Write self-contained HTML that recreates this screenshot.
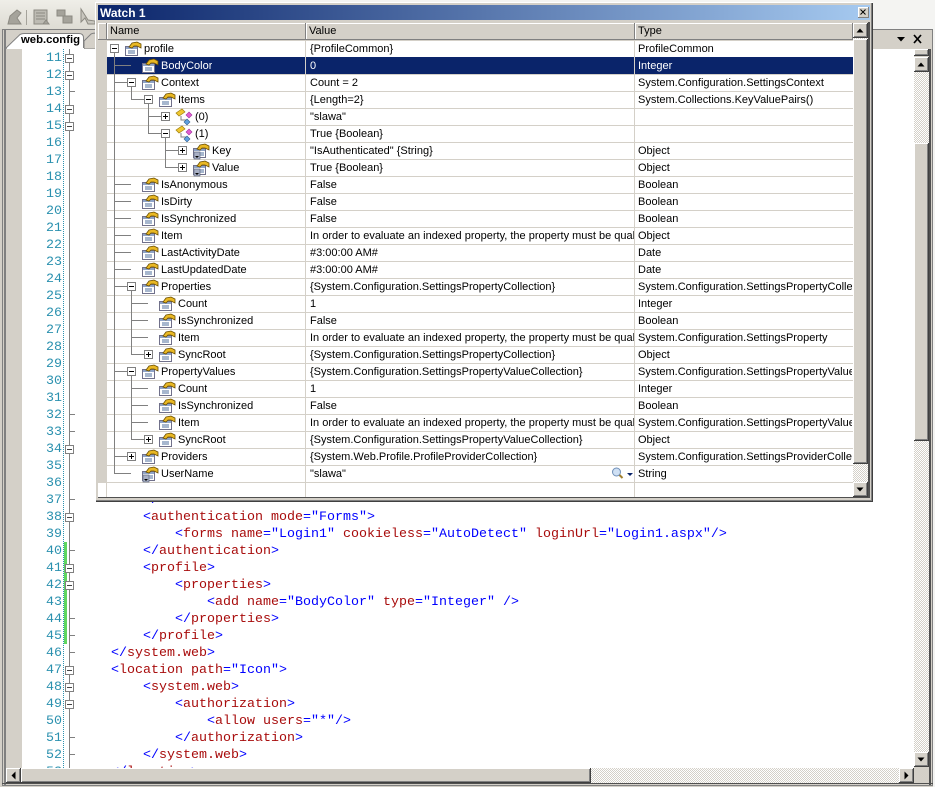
<!DOCTYPE html>
<html><head><meta charset="utf-8"><style>
html,body{margin:0;padding:0}
body{width:935px;height:787px;position:relative;overflow:hidden;background:#d4d0c8;font-family:"Liberation Sans",sans-serif}
div,pre,svg{position:absolute;margin:0}
.b{background:#d4d0c8;box-shadow:inset -1px -1px 0 #404040,inset 1px 1px 0 #fff,inset -2px -2px 0 #808080}
.hb{background:#d4d0c8;box-shadow:inset -1px -1px 0 #808080,inset 1px 1px 0 #fff}
.c{background:repeating-conic-gradient(#d4d0c8 0 25%,#fff 0 50%) 0 0/2px 2px}
pre{font:13.333px/17px "Liberation Mono",monospace}
i{font-style:normal;color:#0000ff}
b{font-weight:normal;color:#a80c0c}
.r{left:107px;width:746px;height:16px;border-top:1px solid #d4d0c8;background:#fff;font-size:11px;line-height:16px;color:#000;white-space:nowrap}
.r span{position:absolute;top:0;height:16px;overflow:hidden}
.r .v{left:203px;width:324px}
.r .t{left:531px;width:214px}
.sel{background:#0a246a;color:#fff;border-top-color:#0a246a}
.h{top:23px;height:16px;font-size:11px;line-height:16px;color:#000}
</style></head><body>

<!-- top toolbar -->
<div style="left:0;top:0;width:935px;height:29px;background:#f4f4f2"></div>
<div style="left:0;top:0;width:96px;height:29px;background:linear-gradient(#efeee8,#dedcd4)"></div>
<svg style="left:0;top:0" width="96" height="29">
<g fill="#a5a39b" stroke="#8c8a82" stroke-width="1">
<path d="M8 24 L10 16 L17 10 L21 13 L17 18 L21 24 Z"/>
<rect x="34" y="10" width="13" height="14" fill="#bdbbb3"/>
<path d="M36 13h9M36 16h9M36 19h9" fill="none"/>
<path d="M46 20l3 4h-6z"/>
<rect x="57" y="10" width="8" height="6"/>
<rect x="63" y="16" width="9" height="7"/>
<path d="M81 9 L81 22 L85 18 L88 24 L95 24 L95 21 L88 20 Z" fill="#c8c6be"/>
</g>
<path d="M26.500 10V25" stroke="#a5a39b"/>
</svg>
<div style="left:2px;top:29px;width:931px;height:1px;background:#808080"></div>

<!-- frame -->
<div style="left:2px;top:30px;width:1px;height:755px;background:#808080"></div>
<div style="left:4px;top:30px;width:2px;height:755px;background:#808080"></div>
<div style="left:929px;top:49px;width:2px;height:736px;background:#505050"></div>
<div style="left:932px;top:29px;width:1px;height:756px;background:#808080"></div>
<div style="left:933px;top:0;width:2px;height:787px;background:#f4f4f2"></div>
<div style="left:2px;top:783px;width:931px;height:1px;background:#505050"></div>
<div style="left:2px;top:785px;width:931px;height:1px;background:#808080"></div>

<!-- tab -->
<svg style="left:0;top:29px" width="100" height="21">
<path d="M84 20 V12 L91 5 Q93 4 97 4 H100 V20 Z" fill="#d4d0c8" stroke="#808080"/>
<path d="M5.500 19.500 L20 5.500 Q22 4.500 24 4.500 H79 Q83.500 4.500 83.500 9 V20 H5.500 Z" fill="#fff" stroke="#808080"/>
<path d="M7 20 H84" stroke="#fff" stroke-width="2"/>
</svg>
<div style="left:21px;top:32px;font:bold 11.300px/17px 'Liberation Sans',sans-serif;color:#000">web.config</div>

<!-- right tab controls -->
<svg style="left:873px;top:30px" width="60" height="19">
<path d="M24 7h8l-4 4.500z" fill="#000"/>
<path d="M41 5l7 8M48 5l-7 8" stroke="#000" stroke-width="1.700" fill="none"/>
</svg>

<!-- editor -->
<div style="left:22px;top:49px;width:892px;height:719px;background:#fff;overflow:hidden">
<div style="left:42px;top:493px;width:3px;height:102px;background:#5fd65f"></div>
<div style="left:41px;top:0;width:0;height:719px;border-left:1px dotted #2b91af"></div>
<div style="left:47px;top:0;width:1px;height:719px;background:#808080"></div>
<pre style="left:0;top:1px;width:40px;text-align:right;color:#2b91af">11
12
13
14
15
16
17
18
19
20
21
22
23
24
25
26
27
28
29
30
31
32
33
34
35
36
37
38
39
40
41
42
43
44
45
46
47
48
49
50
51
52
53</pre>
<pre style="left:89px;top:443px">    <i>&lt;/</i>
    <i>&lt;</i><b>authentication</b> <b>mode</b><i>="Forms"&gt;</i>
        <i>&lt;</i><b>forms</b> <b>name</b><i>="Login1"</i> <b>cookieless</b><i>="AutoDetect"</i> <b>loginUrl</b><i>="Login1.aspx"/&gt;</i>
    <i>&lt;/</i><b>authentication</b><i>&gt;</i>
    <i>&lt;</i><b>profile</b><i>&gt;</i>
        <i>&lt;</i><b>properties</b><i>&gt;</i>
            <i>&lt;</i><b>add</b> <b>name</b><i>="BodyColor"</i> <b>type</b><i>="Integer"</i> <i>/&gt;</i>
        <i>&lt;/</i><b>properties</b><i>&gt;</i>
    <i>&lt;/</i><b>profile</b><i>&gt;</i>
<i>&lt;/</i><b>system.web</b><i>&gt;</i>
<i>&lt;</i><b>location</b> <b>path</b><i>="Icon"&gt;</i>
    <i>&lt;</i><b>system.web</b><i>&gt;</i>
        <i>&lt;</i><b>authorization</b><i>&gt;</i>
            <i>&lt;</i><b>allow</b> <b>users</b><i>="*"/&gt;</i>
        <i>&lt;/</i><b>authorization</b><i>&gt;</i>
    <i>&lt;/</i><b>system.web</b><i>&gt;</i>
<i>&lt;/</i><b>location</b><i>&gt;</i></pre>
</div>
<div style="left:6px;top:49px;width:16px;height:719px;background:#d4d0c8"></div>

<svg style="left:0;top:0" width="80" height="768">
<defs>
<g id="ob"><rect x=".5" y=".5" width="8" height="8" fill="#fff" stroke="#808080"/><path d="M2 4.500h5" stroke="#444"/></g>
</defs>
<g stroke="#808080" fill="none">
<path d="M69 91.500h6M69 414.500h6M69 431.500h6M69 499.500h6M69 550.500h6M69 618.500h6M69 635.500h6M69 652.500h6M69 737.500h6M69 754.500h6"/>
</g>
<use href="#ob" x="65" y="54"/><use href="#ob" x="65" y="71"/><use href="#ob" x="65" y="105"/><use href="#ob" x="65" y="122"/>
<use href="#ob" x="65" y="445"/><use href="#ob" x="65" y="513"/><use href="#ob" x="65" y="564"/><use href="#ob" x="65" y="581"/>
<use href="#ob" x="65" y="666"/><use href="#ob" x="65" y="683"/><use href="#ob" x="65" y="700"/>
</svg>

<!-- main vertical scrollbar -->
<div class="c" style="left:914px;top:72px;width:15px;height:680px"></div>
<div class="b" style="left:914px;top:49px;width:15px;height:7px"></div>
<div class="b" style="left:914px;top:57px;width:15px;height:15px"></div>
<div class="b" style="left:914px;top:143px;width:15px;height:298px"></div>
<div class="b" style="left:914px;top:752px;width:15px;height:15px"></div>
<svg style="left:914px;top:57px" width="15" height="15"><path d="M3.500 9.500h7l-3.500-4z" fill="#000"/></svg>
<svg style="left:914px;top:752px" width="15" height="15"><path d="M3.500 5.500h7l-3.500 4z" fill="#000"/></svg>

<!-- main horizontal scrollbar -->
<div class="c" style="left:21px;top:768px;width:878px;height:15px"></div>
<div class="b" style="left:6px;top:768px;width:15px;height:15px"></div>
<div class="b" style="left:21px;top:768px;width:570px;height:15px"></div>
<div class="b" style="left:899px;top:768px;width:15px;height:15px"></div>
<div style="left:914px;top:768px;width:15px;height:15px;background:#d4d0c8"></div>
<svg style="left:6px;top:768px" width="15" height="15"><path d="M9.500 3.500v8l-4-4z" fill="#000"/></svg>
<svg style="left:899px;top:768px" width="15" height="15"><path d="M5.500 3.500v8l4-4z" fill="#000"/></svg>

<!-- watch window -->
<div style="left:95px;top:2px;width:778px;height:500px;background:#d4d0c8;box-shadow:inset 1px 1px 0 #fff,inset -1px -1px 0 #404040,inset -2px -2px 0 #808080"></div>
<div style="left:98px;top:5px;width:772px;height:15px;background:linear-gradient(to right,#0a246a,#a6caf0)"></div>
<div style="left:100px;top:5px;font:bold 12px/16px 'Liberation Sans',sans-serif;color:#fff">Watch 1</div>
<div class="hb" style="left:858px;top:7px;width:11px;height:11px"></div>
<svg style="left:858px;top:7px" width="11" height="11"><path d="M2.500 2.500l5 5M7.500 2.500l-5 5" stroke="#000" fill="none"/></svg>

<div style="left:98px;top:22px;width:755px;height:18px;background:#d4d0c8"></div>
<div class="hb" style="left:98px;top:23px;width:9px;height:17px"></div>
<div class="hb" style="left:107px;top:23px;width:199px;height:17px"></div>
<div class="hb" style="left:306px;top:23px;width:329px;height:17px"></div>
<div class="hb" style="left:635px;top:23px;width:218px;height:17px"></div>
<div class="h" style="left:110px">Name</div>
<div class="h" style="left:309px">Value</div>
<div class="h" style="left:638px">Type</div>

<div style="left:98px;top:40px;width:9px;height:442px;background:#d4d0c8"></div>
<div style="left:98px;top:482px;width:755px;height:15px;background:#fff"></div>

<div class="r" style="top:40px"><span style="left:37px">profile</span><span class="v">{ProfileCommon}</span><span class="t">ProfileCommon</span></div>
<div class="r sel" style="top:57px"><span style="left:54px">BodyColor</span><span class="v">0</span><span class="t">Integer</span></div>
<div class="r" style="top:74px"><span style="left:54px">Context</span><span class="v">Count = 2</span><span class="t">System.Configuration.SettingsContext</span></div>
<div class="r" style="top:91px"><span style="left:71px">Items</span><span class="v">{Length=2}</span><span class="t">System.Collections.KeyValuePairs()</span></div>
<div class="r" style="top:108px"><span style="left:88px">(0)</span><span class="v">"slawa"</span><span class="t"></span></div>
<div class="r" style="top:125px"><span style="left:88px">(1)</span><span class="v">True {Boolean}</span><span class="t"></span></div>
<div class="r" style="top:142px"><span style="left:105px">Key</span><span class="v">"IsAuthenticated" {String}</span><span class="t">Object</span></div>
<div class="r" style="top:159px"><span style="left:105px">Value</span><span class="v">True {Boolean}</span><span class="t">Object</span></div>
<div class="r" style="top:176px"><span style="left:54px">IsAnonymous</span><span class="v">False</span><span class="t">Boolean</span></div>
<div class="r" style="top:193px"><span style="left:54px">IsDirty</span><span class="v">False</span><span class="t">Boolean</span></div>
<div class="r" style="top:210px"><span style="left:54px">IsSynchronized</span><span class="v">False</span><span class="t">Boolean</span></div>
<div class="r" style="top:227px"><span style="left:54px">Item</span><span class="v">In order to evaluate an indexed property, the property must be qualified and the arguments</span><span class="t">Object</span></div>
<div class="r" style="top:244px"><span style="left:54px">LastActivityDate</span><span class="v">#3:00:00 AM#</span><span class="t">Date</span></div>
<div class="r" style="top:261px"><span style="left:54px">LastUpdatedDate</span><span class="v">#3:00:00 AM#</span><span class="t">Date</span></div>
<div class="r" style="top:278px"><span style="left:54px">Properties</span><span class="v">{System.Configuration.SettingsPropertyCollection}</span><span class="t">System.Configuration.SettingsPropertyCollection</span></div>
<div class="r" style="top:295px"><span style="left:71px">Count</span><span class="v">1</span><span class="t">Integer</span></div>
<div class="r" style="top:312px"><span style="left:71px">IsSynchronized</span><span class="v">False</span><span class="t">Boolean</span></div>
<div class="r" style="top:329px"><span style="left:71px">Item</span><span class="v">In order to evaluate an indexed property, the property must be qualified and the arguments</span><span class="t">System.Configuration.SettingsProperty</span></div>
<div class="r" style="top:346px"><span style="left:71px">SyncRoot</span><span class="v">{System.Configuration.SettingsPropertyCollection}</span><span class="t">Object</span></div>
<div class="r" style="top:363px"><span style="left:54px">PropertyValues</span><span class="v">{System.Configuration.SettingsPropertyValueCollection}</span><span class="t">System.Configuration.SettingsPropertyValueCollection</span></div>
<div class="r" style="top:380px"><span style="left:71px">Count</span><span class="v">1</span><span class="t">Integer</span></div>
<div class="r" style="top:397px"><span style="left:71px">IsSynchronized</span><span class="v">False</span><span class="t">Boolean</span></div>
<div class="r" style="top:414px"><span style="left:71px">Item</span><span class="v">In order to evaluate an indexed property, the property must be qualified and the arguments</span><span class="t">System.Configuration.SettingsPropertyValue</span></div>
<div class="r" style="top:431px"><span style="left:71px">SyncRoot</span><span class="v">{System.Configuration.SettingsPropertyValueCollection}</span><span class="t">Object</span></div>
<div class="r" style="top:448px"><span style="left:54px">Providers</span><span class="v">{System.Web.Profile.ProfileProviderCollection}</span><span class="t">System.Configuration.SettingsProviderCollection</span></div>
<div class="r" style="top:465px"><span style="left:54px">UserName</span><span class="v">"slawa"</span><span class="t">String</span></div>
<div style="left:98px;top:482px;width:755px;height:1px;background:#d4d0c8"></div>

<!-- column lines -->
<div style="left:305px;top:40px;width:1px;height:457px;background:#d4d0c8"></div>
<div style="left:634px;top:40px;width:1px;height:457px;background:#d4d0c8"></div>
<div style="left:106px;top:482px;width:1px;height:15px;background:#d4d0c8"></div>

<!-- tree -->
<svg style="left:0;top:0" width="320" height="500">
<defs>
<g id="m"><rect x=".5" y=".5" width="8" height="8" fill="#fff" stroke="#808080"/><path d="M2 4.500h5" stroke="#000"/></g>
<g id="p"><rect x=".5" y=".5" width="8" height="8" fill="#fff" stroke="#808080"/><path d="M2 4.500h5M4.500 2v5" stroke="#000"/></g>
<g id="d">
<rect x=".5" y="5.500" width="12" height="9" fill="#fff" stroke="#70708a"/>
<rect x="1" y="6" width="11" height="2" fill="#8fa4c8"/>
<path d="M3 10h7M3 12h7" stroke="#4f6f9e"/>
<path d="M4 6 L7 2 L12 1 L16 3 L16 7 L12 5 L9 5 L7 7 Z" fill="#e9b824" stroke="#6a4e00" stroke-width=".8"/>
</g>
<g id="k">
<rect x=".5" y="5.500" width="12" height="9" fill="#fff" stroke="#70708a"/>
<rect x="1" y="6" width="11" height="2" fill="#8fa4c8"/>
<path d="M6 10h5M6 12h5" stroke="#4f6f9e"/>
<rect x="1" y="9" width="6" height="7" fill="#a8b0c4" stroke="#606880" stroke-width=".7"/>
<path d="M2 13h4l-2 2z" fill="#000"/>
<path d="M4 6 L7 2 L12 1 L16 3 L16 7 L12 5 L9 5 L7 7 Z" fill="#e9b824" stroke="#6a4e00" stroke-width=".8"/>
</g>
<g id="e">
<path d="M0 4 L6 0 L9 3 L3 7 Z" fill="#f0c830" stroke="#a08010" stroke-width=".7"/>
<path d="M5 7v4h6" fill="none" stroke="#808080"/>
<path d="M13 3l3 3-3 3-3-3z" fill="#e060d0" stroke="#a030a0" stroke-width=".6"/>
<path d="M11 10l3 3-3 3-3-3z" fill="#60a0e0" stroke="#306090" stroke-width=".6"/>
</g>
</defs>
<g fill="none" stroke="#808080">
<path d="M114.500 50V473.500"/>
<path d="M114 65.500h17M114 82.500h14M114 184.500h17M114 201.500h17M114 218.500h17M114 235.500h17M114 252.500h17M114 269.500h17M114 286.500h14M114 371.500h14M114 456.500h14M114 473.500h17"/>
<path d="M131.500 82V99.500H144"/>
<path d="M148.500 99V133.500H161M148 116.500h13"/>
<path d="M165.500 133V167.500H178M165 150.500h13"/>
<path d="M131.500 286V354.500H144M131 303.500h17M131 320.500h17M131 337.500h17"/>
<path d="M131.500 371V439.500H144M131 388.500h17M131 405.500h17M131 422.500h17"/>
</g>
<use href="#m" x="110" y="44"/>
<use href="#m" x="127" y="78"/><use href="#m" x="144" y="95"/><use href="#p" x="161" y="112"/><use href="#m" x="161" y="129"/>
<use href="#p" x="178" y="146"/><use href="#p" x="178" y="163"/>
<use href="#m" x="127" y="282"/><use href="#p" x="144" y="350"/>
<use href="#m" x="127" y="367"/><use href="#p" x="144" y="435"/>
<use href="#p" x="127" y="452"/>
<use href="#d" x="125" y="41"/>
<use href="#d" x="142" y="58"/><use href="#d" x="142" y="75"/><use href="#d" x="159" y="92"/>
<use href="#e" x="176" y="109"/><use href="#e" x="176" y="126"/>
<use href="#k" x="193" y="143"/><use href="#k" x="193" y="160"/>
<use href="#d" x="142" y="177"/><use href="#d" x="142" y="194"/><use href="#d" x="142" y="211"/><use href="#d" x="142" y="228"/><use href="#d" x="142" y="245"/><use href="#d" x="142" y="262"/><use href="#d" x="142" y="279"/>
<use href="#d" x="159" y="296"/><use href="#d" x="159" y="313"/><use href="#d" x="159" y="330"/><use href="#d" x="159" y="347"/>
<use href="#d" x="142" y="364"/>
<use href="#d" x="159" y="381"/><use href="#d" x="159" y="398"/><use href="#d" x="159" y="415"/><use href="#d" x="159" y="432"/>
<use href="#d" x="142" y="449"/><use href="#k" x="142" y="466"/>
</svg>

<!-- magnifier + dropdown -->
<svg style="left:610px;top:466px" width="24" height="14">
<circle cx="6.500" cy="6" r="4" fill="#cfe0f4" stroke="#6f8fb8"/>
<path d="M9.500 9l3 3" stroke="#a08030" stroke-width="2"/>
<path d="M17 7h6l-3 3z" fill="#0a246a"/>
</svg>

<!-- watch scrollbar -->
<div class="c" style="left:853px;top:38px;width:15px;height:459px"></div>
<div class="b" style="left:853px;top:23px;width:15px;height:15px"></div>
<div class="b" style="left:853px;top:39px;width:15px;height:425px"></div>
<div class="b" style="left:853px;top:482px;width:15px;height:15px"></div>
<div style="left:868px;top:22px;width:2px;height:476px;background:#505050"></div>
<svg style="left:853px;top:23px" width="15" height="15"><path d="M3.500 9.500h7l-3.500-4z" fill="#000"/></svg>
<svg style="left:853px;top:482px" width="15" height="15"><path d="M3.500 5.500h7l-3.500 4z" fill="#000"/></svg>
<div style="left:98px;top:497px;width:771px;height:1px;background:#505050"></div>

</body></html>
